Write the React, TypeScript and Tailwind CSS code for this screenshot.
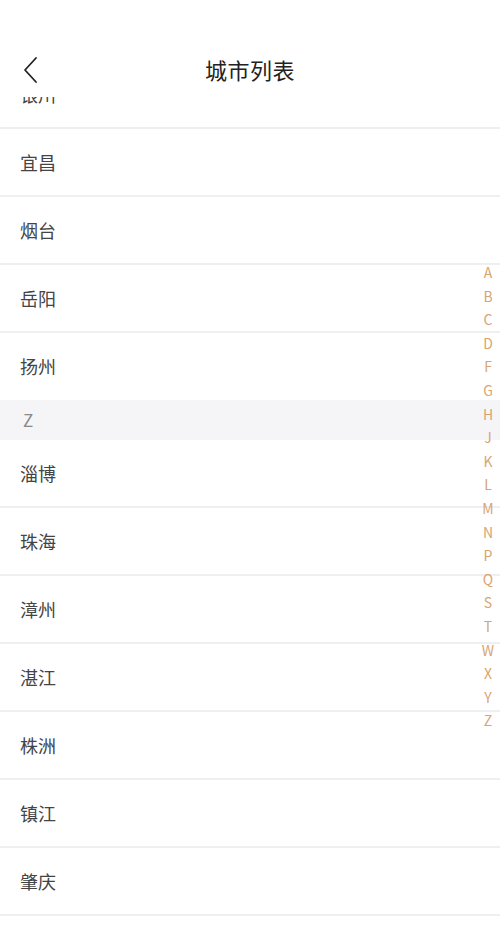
import React from "react"

const letters = ["A", "B", "C", "D", "F", "G", "H", "J", "K", "L", "M", "N", "P", "Q", "S", "T", "W", "X", "Y", "Z"]

const sections: { letter?: string; cities: string[] }[] = [
  { cities: ["银川", "宜昌", "烟台", "岳阳", "扬州"] },
  { letter: "Z", cities: ["淄博", "珠海", "漳州", "湛江", "株洲", "镇江", "肇庆"] },
]

export default function App() {
  return (
    <div
      className="relative w-[500px] h-[931px] bg-white overflow-hidden flex flex-col"
      style={{ fontFamily: '"Noto Sans CJK SC", "Noto Sans", sans-serif' }}
    >
      {/* 顶部导航 */}
      <header className="relative z-10 h-[97px] shrink-0 bg-white grid grid-cols-[80px_1fr_80px] items-center pt-[42px]">
        <button type="button" className="justify-self-start ml-[21px] w-[18px] h-[30px] flex items-center justify-center">
          <svg width="16" height="28" viewBox="0 0 16 28" fill="none">
            <polyline points="14,2 3,14 14,26" stroke="#222" strokeWidth="1.8" strokeLinecap="round" strokeLinejoin="round" />
          </svg>
        </button>
        <h1 className="text-center text-[22px] text-[#222] font-normal tracking-[0.5px]">城市列表</h1>
        <div />
      </header>

      {/* 列表（已滚动） */}
      <div className="flex-1 overflow-hidden">
        <div className="-mt-[36px]">
          {sections.map((s, si) => (
            <section key={si}>
              {s.letter && (
                <div className="h-[40px] bg-[#f5f5f8] flex items-center pl-[23px] text-[17px] text-[#8a8a8a]">
                  {s.letter}
                </div>
              )}
              {s.cities.map((c, i) => {
                const last = i === s.cities.length - 1 && si < sections.length - 1
                return (
                  <div
                    key={c}
                    className={`flex items-center pl-[20px] text-[18px] text-[#444] ${
                      last ? "h-[67px]" : "h-[68px] border-b-2 border-[#efefef]"
                    }`}
                  >
                    {c}
                  </div>
                )
              })}
            </section>
          ))}
        </div>
      </div>

      {/* 字母索引 */}
      <nav className="absolute right-0 top-[261px] w-[24px] flex flex-col items-center z-20">
        {letters.map((l) => (
          <span key={l} className="h-[23.6px] leading-[23.6px] text-[14px] text-[#d9a472]">
            {l}
          </span>
        ))}
      </nav>
    </div>
  )
}
